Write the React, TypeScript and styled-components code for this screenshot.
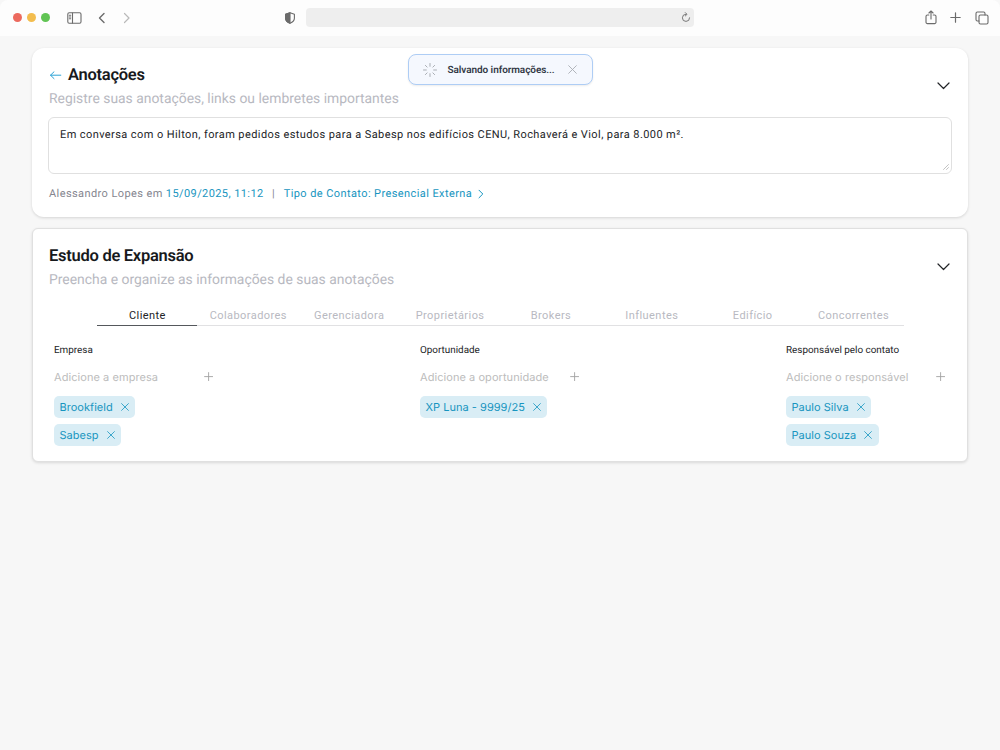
import React from "react";
import styled, { createGlobalStyle } from "styled-components";

const GlobalStyle = createGlobalStyle`
  * { box-sizing: border-box; }
  html, body { margin: 0; background: #f7f7f7; }
  body { font-family: Roboto, "Liberation Sans", sans-serif; text-rendering: geometricPrecision; }
  button { font: inherit; background: none; border: 0; padding: 0; margin: 0; display: flex; }
  h2, p { margin: 0; }
`;

const Window = styled.div`
  width: 1000px;
  height: 750px;
  overflow: hidden;
  background: #f7f7f7;
`;

const BrowserBar = styled.header`
  height: 36px;
  display: flex;
  align-items: center;
  justify-content: space-between;
  background: #fdfdfd;
  border-radius: 8px 8px 0 0;
  padding: 0 11px 1px 13px;
`;

const BarGroup = styled.div<{ $width: number; $end?: boolean }>`
  width: ${(p) => p.$width}px;
  display: flex;
  align-items: center;
  justify-content: ${(p) => (p.$end ? "flex-end" : "flex-start")};
`;

const Light = styled.span<{ $color: string }>`
  width: 9px;
  height: 9px;
  margin-right: 5px;
  border-radius: 50%;
  background: ${(p) => p.$color};
`;

const Icon = styled.svg<{ $ml?: number }>`
  display: block;
  flex: none;
  margin-left: ${(p) => p.$ml ?? 0}px;
  fill: none;
  stroke: currentColor;
  stroke-linecap: round;
  stroke-linejoin: round;
`;

const ToolIcon = styled(Icon)<{ $faded?: boolean }>`
  color: ${(p) => (p.$faded ? "#b9b9b9" : "#6b6b6b")};
`;

const AddressBar = styled.div`
  width: 388px;
  height: 19px;
  display: flex;
  align-items: center;
  justify-content: flex-end;
  padding-right: 3px;
  margin-left: 10px;
  border-radius: 4px;
  background: #eeeeee;
`;

const Page = styled.main`
  display: flex;
  flex-direction: column;
  gap: 11px;
  padding: 12px 32px;
`;

const Card = styled.section<{ $outlined?: boolean }>`
  height: ${(p) => (p.$outlined ? 234 : 169)}px;
  padding: 16px ${(p) => (p.$outlined ? 15 : 16)}px;
  background: #fff;
  border: ${(p) => (p.$outlined ? "1px solid #e0e0e0" : "0")};
  border-radius: ${(p) => (p.$outlined ? 6 : 12)}px;
  box-shadow: 0 1px 3px rgba(0, 0, 0, ${(p) => (p.$outlined ? 0.12 : 0.14)});
`;

const CardHeader = styled.div`
  display: flex;
  justify-content: space-between;
  align-items: flex-start;
  height: 44px;
  padding: 0 2px 0 1px;
`;

const Toggle = styled.button`
  && {
    margin-top: 18px;
  }
`;

const TitleRow = styled.div`
  display: flex;
  align-items: center;
  gap: 6px;
`;

const Title = styled.h2`
  font-size: 16.5px;
  font-weight: 600;
  line-height: 24px;
  letter-spacing: -0.27px;
  color: #17191c;
`;

const Subtitle = styled.p`
  padding-top: 1px;
  font-size: 13.9px;
  line-height: 20px;
  color: #b8b9c1;
`;

const Note = styled.div`
  position: relative;
  height: 57px;
  margin-top: 9px;
  padding: 9px 11px;
  border: 1px solid #e0e0e0;
  border-radius: 6px;
  font-size: 11px;
  line-height: 16px;
  letter-spacing: 0.41px;
  color: #222427;
`;

const ResizeGrip = styled(Icon)`
  position: absolute;
  right: 2px;
  bottom: 3px;
  color: #a8a8a8;
`;

const Meta = styled.div`
  display: flex;
  align-items: center;
  padding: 12px 1px 0;
  font-size: 11px;
  line-height: 16px;
  letter-spacing: 0.41px;
  color: #85868f;
`;

const Link = styled.a<{ $ml: number }>`
  display: flex;
  align-items: center;
  margin-left: ${(p) => p.$ml}px;
  color: #1795c0;
`;

const Divider = styled.span`
  margin-left: 8.5px;
`;

const Toast = styled.div`
  position: absolute;
  left: 408px;
  top: 54px;
  width: 185px;
  height: 31px;
  display: flex;
  align-items: center;
  padding: 0 15px 0 13px;
  border: 1px solid #aecdf5;
  border-radius: 8px;
  background: #f5f8fe;
  box-shadow: 0 1px 2px rgba(0, 0, 0, 0.08);
  color: #a9adb3;
`;

const ToastText = styled.span`
  flex: 1;
  margin-left: 9.5px;
  padding-top: 1px;
  font-size: 10px;
  font-weight: 600;
  line-height: 15px;
  letter-spacing: -0.07px;
  white-space: nowrap;
  color: #343a46;
`;

const Tabs = styled.nav`
  display: grid;
  grid-template-columns: repeat(8, 1fr);
  width: 807px;
  margin: 16px auto 0;
`;

const Tab = styled.button<{ $active?: boolean }>`
  && {
    justify-content: center;
    height: 21px;
    padding: 1px 0 0 1px;
    border-bottom: 1px solid ${(p) => (p.$active ? "#55585c" : "#e1e1e3")};
    font-size: 11px;
    line-height: 20px;
    letter-spacing: 0.43px;
    color: ${(p) => (p.$active ? "#222427" : "#b8b9c1")};
  }
`;

const Columns = styled.div`
  display: flex;
  justify-content: space-between;
  padding: 18px 6px 0 6px;
`;

const Column = styled.div`
  width: 160px;
  display: flex;
  flex-direction: column;
  align-items: flex-start;
`;

const Label = styled.div`
  font-size: 9.9px;
  line-height: 14px;
  color: #222427;
  white-space: nowrap;
`;

const AddRow = styled.div`
  width: 100%;
  display: flex;
  align-items: center;
  justify-content: space-between;
  margin: 11px 0;
  font-family: Inter, Roboto, sans-serif;
  font-size: 11px;
  line-height: 16px;
  letter-spacing: 0.06px;
  color: #bcbcbc;
  white-space: nowrap;
`;

const Chip = styled.span`
  height: 22px;
  display: flex;
  align-items: center;
  gap: 8px;
  margin-bottom: 6px;
  padding: 0 6.5px 0 5.5px;
  border-radius: 5px;
  background: #d9edf5;
  font-family: Inter, Roboto, sans-serif;
  font-size: 11px;
  letter-spacing: 0.03px;
  color: #1795c0;
  white-space: nowrap;
`;

const ChevronDown = () => (
  <Icon width="13" height="8" viewBox="0 0 13 8" strokeWidth="1.2" color="#222427">
    <path d="M1 1l5.5 5.5L12 1" />
  </Icon>
);

const Cross = ({ size }: { size: number }) => (
  <Icon width={size} height={size} viewBox="0 0 8 8" strokeWidth="0.8">
    <path d="M.6.6l6.8 6.8M7.4.6L.6 7.4" />
  </Icon>
);

const Plus = () => (
  <Icon width="10" height="10" viewBox="0 0 10 10" strokeWidth="0.9" color="#a2a2a2">
    <path d="M4.600.6v8M.6 4.600h8" />
  </Icon>
);

const Spinner = () => (
  <Icon width="16" height="16" viewBox="0 0 16 16" strokeWidth="1">
    <path d="M8 1.5v2.8M12.6 3.4l-1.7 1.7M14.5 8h-2.8M12.6 12.6l-1.7-1.7M8 14.5v-2.8M3.4 12.6l1.7-1.7M1.5 8h2.8M3.4 3.4l1.7 1.7" />
  </Icon>
);

const tabs = ["Cliente", "Colaboradores", "Gerenciadora", "Proprietários", "Brokers", "Influentes", "Edifício", "Concorrentes"];

const columns = [
  { label: "Empresa", placeholder: "Adicione a empresa", items: ["Brookfield", "Sabesp"] },
  { label: "Oportunidade", placeholder: "Adicione a oportunidade", items: ["XP Luna - 9999/25"] },
  { label: "Responsável pelo contato", placeholder: "Adicione o responsável", items: ["Paulo Silva", "Paulo Souza"] },
];

export default function App() {
  return (
    <Window>
      <GlobalStyle />
      <BrowserBar>
        <BarGroup $width={271}>
          <Light $color="#ec6a5e" />
          <Light $color="#f3bd4e" />
          <Light $color="#61c454" />
          <ToolIcon $ml={12} width="15" height="12" viewBox="0 0 15 12" strokeWidth="1.1">
            <rect x=".8" y=".8" width="13.2" height="10.4" rx="1.4" />
            <path d="M5.5 1v10M2.4 3.2h1.3M2.4 5h1.3M2.4 6.8h1.3" />
          </ToolIcon>
          <ToolIcon $ml={16} width="8" height="12" viewBox="0 0 8 12" strokeWidth="1.4">
            <path d="M6 1.5L1.5 6 6 10.5" />
          </ToolIcon>
          <ToolIcon $faded $ml={17} width="8" height="12" viewBox="0 0 8 12" strokeWidth="1.2">
            <path d="M1.5 1.5L6 6l-4.5 4.5" />
          </ToolIcon>
        </BarGroup>
        <ToolIcon width="12" height="12" viewBox="0 0 12 12" strokeWidth="1.1">
          <path d="M6 .8l4.4 1.5v3.9c0 2.2-1.7 3.9-4.4 5-2.7-1.1-4.4-2.8-4.4-5V2.3z" />
          <path d="M6 .8v10.4c-2.7-1.1-4.4-2.8-4.4-5V2.3z" fill="currentColor" />
        </ToolIcon>
        <AddressBar>
          <ToolIcon width="10" height="11" viewBox="0 0 10 11" strokeWidth=".9">
            <path d="M5 2.2a3.6 3.6 0 1 0 3.6 3.6M4.300.6L6 2.300 4.300 4" />
          </ToolIcon>
        </AddressBar>
        <BarGroup $width={295} $end>
          <ToolIcon width="12" height="15" viewBox="0 0 12 15" strokeWidth="1.1">
            <path d="M3.8 5H2.4A1.4 1.4 0 0 0 1 6.4v5.8a1.4 1.4 0 0 0 1.4 1.4h7.2a1.4 1.4 0 0 0 1.4-1.4V6.4A1.4 1.4 0 0 0 9.6 5H8.2M6 9V1M3.9 3L6 1l2.1 2" />
          </ToolIcon>
          <ToolIcon $ml={13} width="11" height="11" viewBox="0 0 11 11" strokeWidth="1.2">
            <path d="M5.5.8v9.4M.8 5.5h9.4" />
          </ToolIcon>
          <ToolIcon $ml={14} width="14" height="14" viewBox="0 0 14 14" strokeWidth="1.1">
            <rect x="4" y="4" width="9" height="9" rx="1.5" />
            <path d="M4 10H2.4A1.4 1.4 0 0 1 1 8.6V2.4A1.4 1.4 0 0 1 2.4 1h6.2A1.4 1.4 0 0 1 10 2.4V4" />
          </ToolIcon>
        </BarGroup>
      </BrowserBar>

      <Page>
        <Card>
          <CardHeader>
            <div>
              <TitleRow>
                <Icon width="13" height="10" viewBox="0 0 13 10" strokeWidth="1" color="#2aa2d6">
                  <path d="M11.8 4.200H1.600M5 .8L1.500 4.200 5 7.600" />
                </Icon>
                <Title>Anotações</Title>
              </TitleRow>
              <Subtitle>Registre suas anotações, links ou lembretes importantes</Subtitle>
            </div>
            <Toggle aria-label="Recolher"><ChevronDown /></Toggle>
          </CardHeader>
          <Note>
            Em conversa com o Hilton, foram pedidos estudos para a Sabesp nos edifícios CENU, Rochaverá e Viol, para 8.000 m².
            <ResizeGrip width="6" height="6" viewBox="0 0 6 6" strokeWidth=".7">
              <path d="M.5 5.5l5-5M3.5 5.5l2-2" />
            </ResizeGrip>
          </Note>
          <Meta>
            <span>Alessandro Lopes em</span>
            <Link $ml={3}>15/09/2025, 11:12</Link>
            <Divider>|</Divider>
            <Link $ml={8.5}>
              Tipo de Contato: Presencial Externa
              <Icon $ml={5.5} width="6" height="10" viewBox="0 0 6 10" strokeWidth="1">
                <path d="M1 1.2L4.800 5 1 8.800" />
              </Icon>
            </Link>
          </Meta>
        </Card>

        <Card $outlined>
          <CardHeader>
            <div>
              <Title>Estudo de Expansão</Title>
              <Subtitle>Preencha e organize as informações de suas anotações</Subtitle>
            </div>
            <Toggle aria-label="Recolher"><ChevronDown /></Toggle>
          </CardHeader>
          <Tabs>
            {tabs.map((tab, i) => (
              <Tab key={tab} $active={i === 0}>{tab}</Tab>
            ))}
          </Tabs>
          <Columns>
            {columns.map((column) => (
              <Column key={column.label}>
                <Label>{column.label}</Label>
                <AddRow>
                  {column.placeholder}
                  <Plus />
                </AddRow>
                {column.items.map((item) => (
                  <Chip key={item}>
                    {item}
                    <Cross size={8} />
                  </Chip>
                ))}
              </Column>
            ))}
          </Columns>
        </Card>
      </Page>

      <Toast>
        <Spinner />
        <ToastText>Salvando informações...</ToastText>
        <Cross size={9} />
      </Toast>
    </Window>
  );
}
